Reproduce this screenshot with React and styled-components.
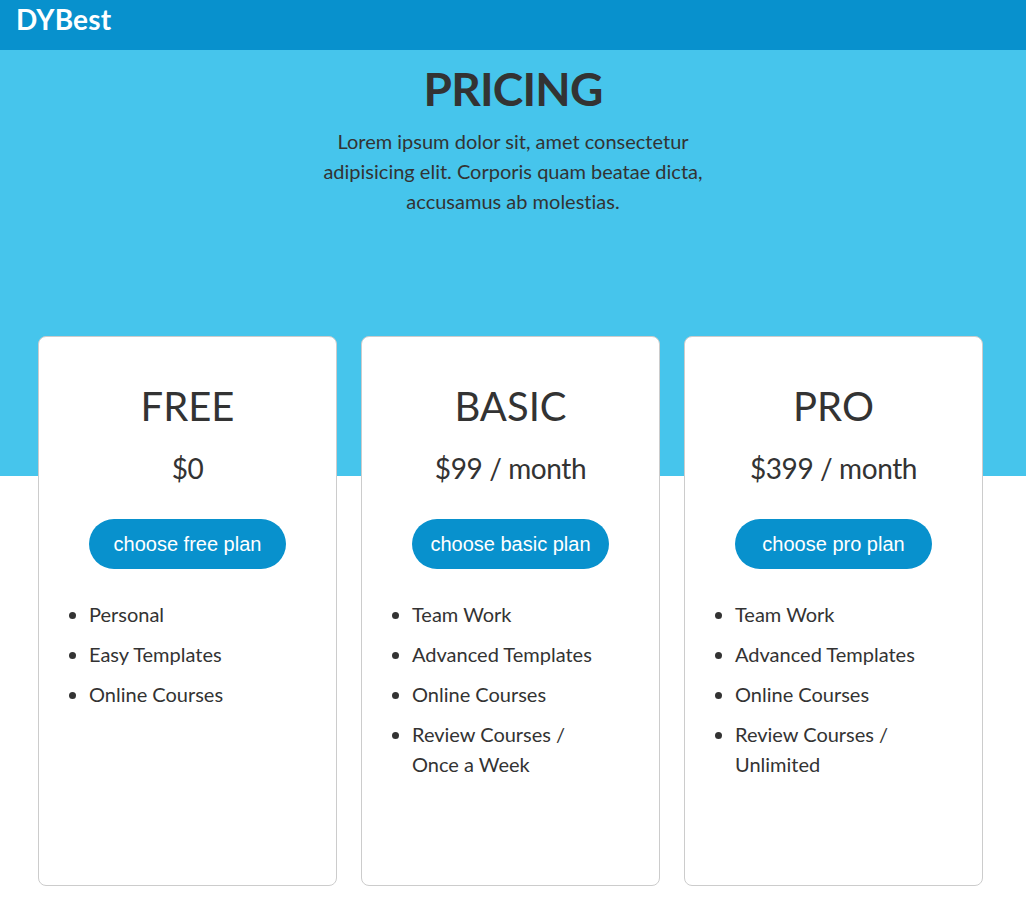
import React from "react";
import styled, { createGlobalStyle } from "styled-components";

const GlobalStyle = createGlobalStyle`
  * { box-sizing: border-box; }
  body {
    margin: 0;
    font-family: Lato, "Open Sans", sans-serif;
    color: #333;
    background: #fff;
  }
`;

const TopBar = styled.header`
  height: 50px;
  background: #0891cd;
  padding: 2px 16px 0;
`;

const Logo = styled.h1`
  margin: 0;
  font-size: 28px;
  font-weight: 700;
  color: #fff;
  letter-spacing: 0.2px;
`;

const Hero = styled.section`
  height: 426px;
  background: #46c5ec;
  text-align: center;
  padding-top: 11px;
`;

const Title = styled.h2`
  margin: 0;
  font-size: 46px;
  font-weight: 700;
  color: #333;
  letter-spacing: -0.8px;
`;

const Intro = styled.p`
  margin: 10px auto 0;
  max-width: 400px;
  font-size: 20px;
  line-height: 30px;
  font-variant-ligatures: none;
  color: #333;
`;

const Cards = styled.div`
  display: flex;
  gap: 24px;
  padding: 0 38px;
  margin-top: -140px;
`;

const Card = styled.div`
  width: 299px;
  height: 550px;
  background: #fff;
  border: 1px solid #ccc;
  border-radius: 8px;
  padding-top: 45px;
  text-align: center;
`;

const PlanName = styled.h3`
  margin: 0;
  font-size: 40px;
  font-weight: 400;
`;

const Price = styled.div`
  margin-top: 21px;
  font-size: 28px;
  letter-spacing: -0.4px;
`;

const ChooseButton = styled.button`
  margin-top: 34px;
  width: 197px;
  height: 50px;
  border: none;
  border-radius: 25px;
  background: #0891cd;
  color: #fff;
  font-family: "Liberation Sans", Arial, sans-serif;
  font-size: 20px;
  cursor: pointer;
`;

const Features = styled.ul`
  margin: 30px 0 0;
  padding: 0 50px;
  text-align: left;
  font-size: 20px;
  line-height: 30px;
  font-variant-ligatures: none;
`;

const Feature = styled.li`
  margin-bottom: 10px;
`;

const plans = [
  {
    name: "FREE",
    price: "$0",
    button: "choose free plan",
    features: ["Personal", "Easy Templates", "Online Courses"],
  },
  {
    name: "BASIC",
    price: "$99 / month",
    button: "choose basic plan",
    features: [
      "Team Work",
      "Advanced Templates",
      "Online Courses",
      "Review Courses / Once a Week",
    ],
  },
  {
    name: "PRO",
    price: "$399 / month",
    button: "choose pro plan",
    features: [
      "Team Work",
      "Advanced Templates",
      "Online Courses",
      "Review Courses / Unlimited",
    ],
  },
];

export default function App() {
  return (
    <>
      <GlobalStyle />
      <TopBar>
        <Logo>DYBest</Logo>
      </TopBar>
      <Hero>
        <Title>PRICING</Title>
        <Intro>
          Lorem ipsum dolor sit, amet consectetur adipisicing elit. Corporis
          quam beatae dicta, accusamus ab molestias.
        </Intro>
      </Hero>
      <Cards>
        {plans.map((plan) => (
          <Card key={plan.name}>
            <PlanName>{plan.name}</PlanName>
            <Price>{plan.price}</Price>
            <ChooseButton>{plan.button}</ChooseButton>
            <Features>
              {plan.features.map((f) => (
                <Feature key={f}>{f}</Feature>
              ))}
            </Features>
          </Card>
        ))}
      </Cards>
    </>
  );
}
